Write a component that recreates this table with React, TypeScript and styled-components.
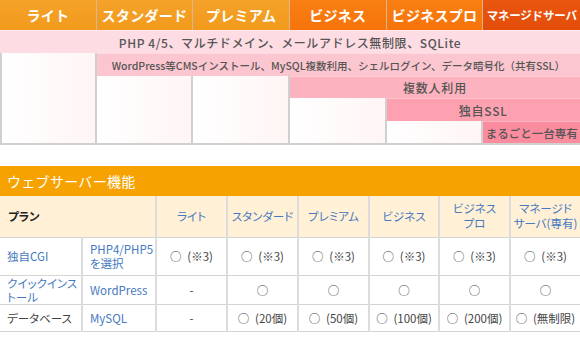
import React from "react";
import styled, { createGlobalStyle } from "styled-components";

const Global = createGlobalStyle`
  html, body { margin: 0; padding: 0; background: #ffffff; }
  body { font-family: "Noto Sans CJK JP", "Noto Sans", sans-serif; width: 580px; }
  *, *::before, *::after { box-sizing: border-box; }
`;

const Page = styled.div`
  width: 580px;
  display: flex;
  flex-direction: column;
`;

/* ---------- plan chart ---------- */

const Chart = styled.div`
  display: grid;
  grid-template-columns: repeat(6, minmax(0, 1fr));
  grid-template-rows: 30px 23px 23px 22px 23px 22px;
  border-bottom: 2px solid #d0d0d0;
`;

const headTones: Record<string, string> = {
  light: "linear-gradient(#f5a229, #f19a1d)",
  mid: "linear-gradient(#f97f13, #f6740a)",
  deep: "linear-gradient(#e9560f, #e34d0a)",
};

const PlanHead = styled.div<{ $tone: "light" | "mid" | "deep"; $small?: boolean }>`
  background: ${(p) => headTones[p.$tone]};
  color: #ffffff;
  font-weight: 700;
  font-size: ${(p) => (p.$small ? "11.5px" : "14px")};
  letter-spacing: ${(p) => (p.$small ? "-0.2px" : "0.3px")};
  display: flex;
  align-items: center;
  justify-content: center;
  white-space: nowrap;
  overflow: hidden;
  border-right: 1px solid #d9b796;
  &:nth-child(6) { border-right: none; }
`;

const bandColors = ["#fddce3", "#fbc6d0", "#fdb3bf", "#fda1b0", "#fa8c9e"];

const Band = styled.div<{ $level: number; $col: string; $row: number; $size: number; $spacing: number }>`
  grid-column: ${(p) => p.$col};
  grid-row: ${(p) => p.$row};
  background: ${(p) => bandColors[p.$level]};
  color: #555555;
  font-size: ${(p) => p.$size}px;
  letter-spacing: ${(p) => p.$spacing}px;
  font-weight: 500;
  display: flex;
  align-items: center;
  justify-content: center;
  white-space: nowrap;
  border-top: 1px solid rgba(255, 255, 255, 0.35);
`;

const Filler = styled.div<{ $col: number; $rows: string; $first?: boolean }>`
  grid-column: ${(p) => p.$col};
  grid-row: ${(p) => p.$rows};
  background: linear-gradient(90deg, #ffffff 0%, #fff5f5 100%);
  border-right: 2px solid #d0d0d0;
  border-left: ${(p) => (p.$first ? "2px solid #d0d0d0" : "none")};
`;

/* ---------- feature table ---------- */

const Section = styled.section`
  margin-top: 21px;
  display: flex;
  flex-direction: column;
`;

const TitleBar = styled.h2`
  margin: 0;
  height: 30px;
  background: #f6a200;
  color: #ffffff;
  font-size: 14px;
  font-weight: 400;
  display: flex;
  align-items: center;
  padding-left: 7px;
  letter-spacing: 0.3px;
`;

const Table = styled.table`
  width: 580px;
  border-collapse: collapse;
  table-layout: fixed;
  font-size: 11px;
  font-feature-settings: "palt" 1;
`;

const HeadRow = styled.tr`
  height: 41px;
  background: #fff0d6;
`;

const Th = styled.th<{ $left?: boolean }>`
  font-weight: ${(p) => (p.$left ? 700 : 400)};
  color: ${(p) => (p.$left ? "#222222" : "#4679c0")};
  text-align: ${(p) => (p.$left ? "left" : "center")};
  padding: ${(p) => (p.$left ? "0 8px" : "0")};
  font-size: 11.5px;
  line-height: 15px;
  white-space: nowrap;
  border-bottom: 1px solid #d4d4d4;
  border-left: 2px solid #dcdcdc;
  &:first-child { border-left: none; }
`;

const Row = styled.tr<{ $h: number }>`
  height: ${(p) => p.$h}px;
`;

const Td = styled.td<{ $tone?: "link" | "text"; $left?: boolean }>`
  color: ${(p) => (p.$tone === "link" ? "#4679c0" : "#444444")};
  text-align: ${(p) => (p.$left ? "left" : "center")};
  padding: ${(p) => (p.$left ? "0 7px" : "0")};
  font-size: 11.5px;
  line-height: 14px;
  white-space: nowrap;
  border-bottom: 1px solid #d4d4d4;
  border-left: 2px solid #dcdcdc;
  &:first-child { border-left: none; }
`;

const plans = [
  { name: "ライト", tone: "light" as const },
  { name: "スタンダード", tone: "light" as const },
  { name: "プレミアム", tone: "light" as const },
  { name: "ビジネス", tone: "mid" as const },
  { name: "ビジネスプロ", tone: "mid" as const },
];

const SP = "\u2002";

export default function App() {
  return (
    <Page>
      <Global />
      <Chart>
        {plans.map((p) => (
          <PlanHead key={p.name} $tone={p.tone}>
            {p.name}
          </PlanHead>
        ))}
        <PlanHead $tone="deep" $small>
          マネージドサーバ
        </PlanHead>

        <Band $level={0} $col="1 / 7" $row={2} $size={12} $spacing={0.6}>
          PHP 4/5、マルチドメイン、メールアドレス無制限、SQLite
        </Band>

        <Filler $col={1} $rows="3 / 7" $first />
        <Band $level={1} $col="2 / 7" $row={3} $size={10.5} $spacing={0}>
          WordPress等CMSインストール、MySQL複数利用、シェルログイン、データ暗号化（共有SSL）
        </Band>

        <Filler $col={2} $rows="4 / 7" />
        <Filler $col={3} $rows="4 / 7" />
        <Band $level={2} $col="4 / 7" $row={4} $size={12} $spacing={0.8}>
          複数人利用
        </Band>

        <Filler $col={4} $rows="5 / 7" />
        <Band $level={3} $col="5 / 7" $row={5} $size={12} $spacing={0.8}>
          独自SSL
        </Band>

        <Filler $col={5} $rows="6 / 7" />
        <Band $level={4} $col="6 / 7" $row={6} $size={11.5} $spacing={0}>
          まるごと一台専有
        </Band>
      </Chart>

      <Section>
        <TitleBar>ウェブサーバー機能</TitleBar>
        <Table>
          <colgroup>
            <col style={{ width: 82 }} />
            <col style={{ width: 74 }} />
            <col style={{ width: 71 }} />
            <col style={{ width: 71 }} />
            <col style={{ width: 71 }} />
            <col style={{ width: 70 }} />
            <col style={{ width: 71 }} />
            <col style={{ width: 70 }} />
          </colgroup>
          <thead>
            <HeadRow>
              <Th $left colSpan={2}>プラン</Th>
              <Th>ライト</Th>
              <Th>スタンダード</Th>
              <Th>プレミアム</Th>
              <Th>ビジネス</Th>
              <Th>
                ビジネス
                <br />
                プロ
              </Th>
              <Th>
                マネージド
                <br />
                サーバ(専有)
              </Th>
            </HeadRow>
          </thead>
          <tbody>
            <Row $h={38}>
              <Td $left $tone="link">独自CGI</Td>
              <Td $left $tone="link">
                PHP4/PHP5
                <br />
                を選択
              </Td>
              {Array.from({ length: 6 }).map((_, i) => (
                <Td key={i}>○{SP}(※3)</Td>
              ))}
            </Row>
            <Row $h={28}>
              <Td $left $tone="link">
                クイックインス
                <br />
                トール
              </Td>
              <Td $left $tone="link">WordPress</Td>
              <Td>-</Td>
              <Td>○</Td>
              <Td>○</Td>
              <Td>○</Td>
              <Td>○</Td>
              <Td>○</Td>
            </Row>
            <Row $h={27}>
              <Td $left>データベース</Td>
              <Td $left $tone="link">MySQL</Td>
              <Td>-</Td>
              <Td>○{SP}(20個)</Td>
              <Td>○{SP}(50個)</Td>
              <Td>○{SP}(100個)</Td>
              <Td>○{SP}(200個)</Td>
              <Td>○{SP}(無制限)</Td>
            </Row>
          </tbody>
        </Table>
      </Section>
    </Page>
  );
}
